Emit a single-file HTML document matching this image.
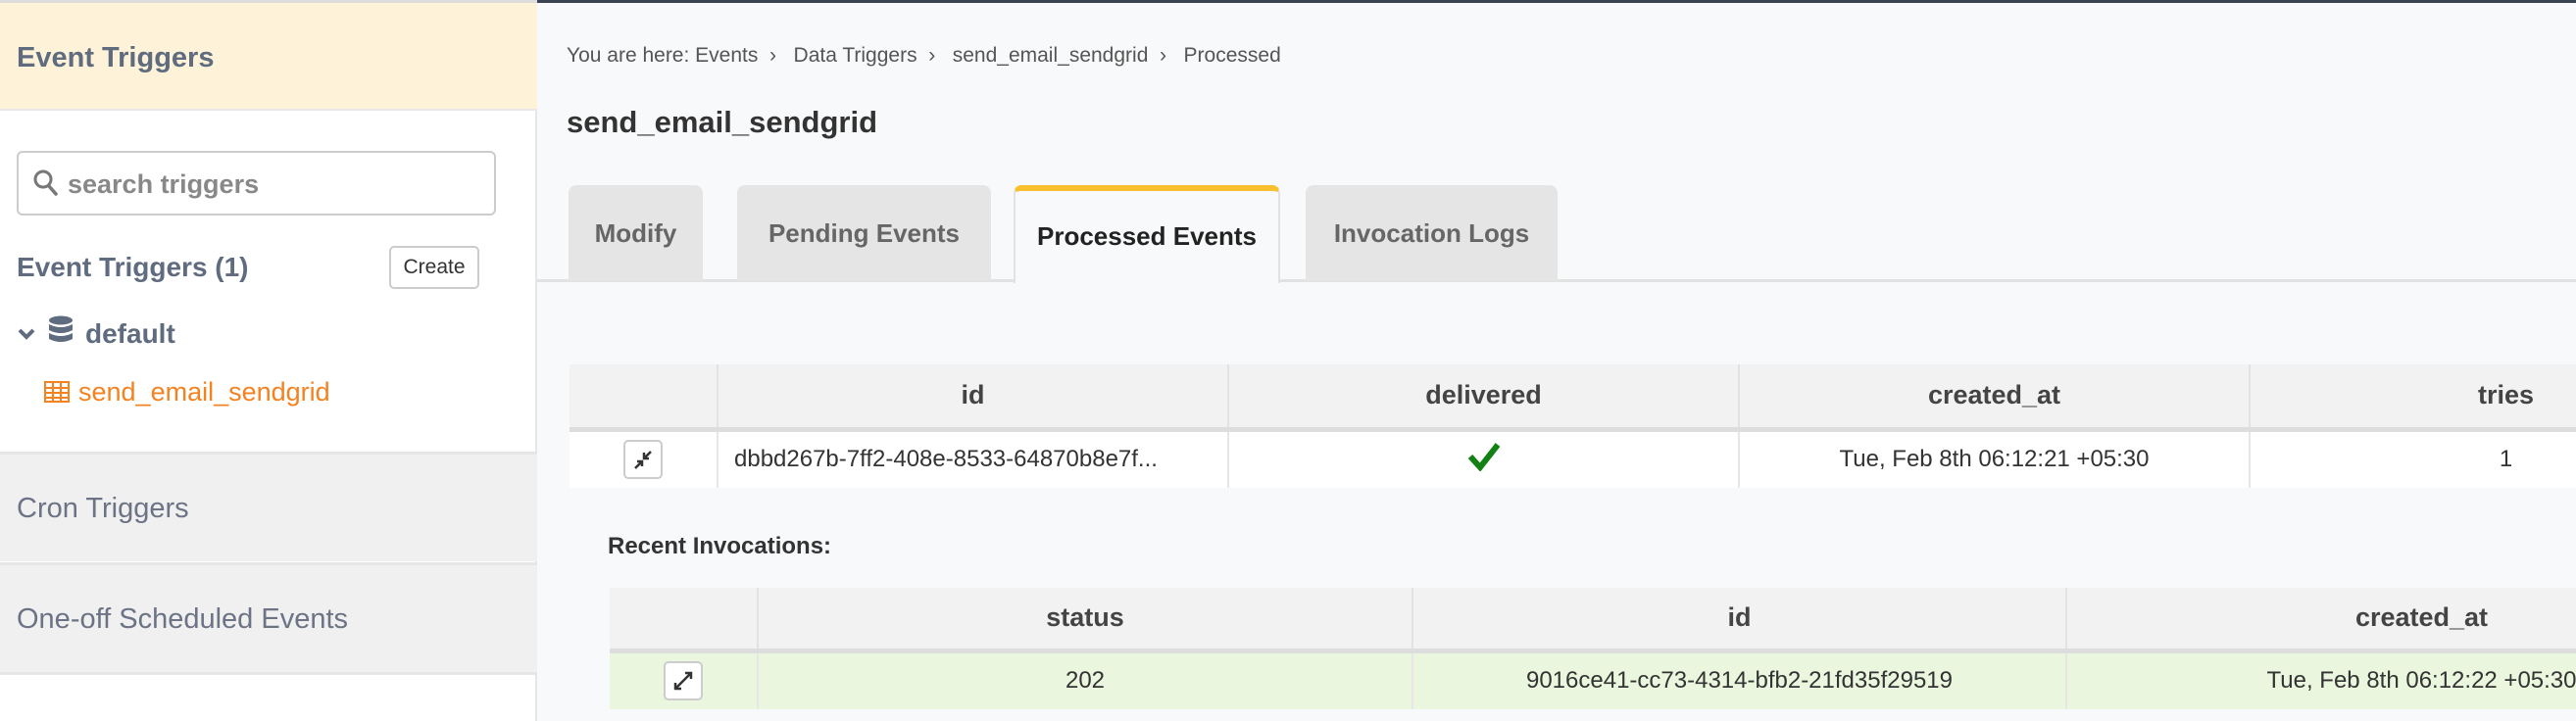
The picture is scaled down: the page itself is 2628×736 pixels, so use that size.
<!DOCTYPE html>
<html><head><meta charset="utf-8"><style>
*{box-sizing:border-box;margin:0;padding:0}
body{width:2628px;height:736px;overflow:hidden;background:#f8f9fa;font-family:"Liberation Sans Narrow","Liberation Sans",sans-serif;color:#333;position:relative}
.abs{position:absolute}
#topline{left:548px;top:0;width:2080px;height:3px;background:#3b4252}
#side{left:0;top:0;width:548px;height:736px;background:#fff;border-right:2px solid #e6e6e6}
.hdr{left:0;top:0;width:548px;height:113px;background:#fef3d8;border-top:3px solid #ddd;border-bottom:2px solid #e8e8e8;color:#5f6b7f;font-weight:bold;font-size:29px;padding:40px 0 0 17px}
.search{left:17px;top:154px;width:489px;height:66px;border:2px solid #ccc;border-radius:6px;color:#888;font-size:27px;font-weight:bold;padding:17px 0 0 50px}
.lbl{color:#5f6b7f;font-weight:bold;font-size:28px}
.create{left:397px;top:251px;width:92px;height:44px;border:2px solid #ccc;border-radius:5px;font-size:21px;text-align:center;line-height:40px;color:#333;background:#fff}
.sec{left:0;width:548px;height:112px;background:#f0f0f0;border-top:3px solid #e6e6e6;color:#6b7385;font-size:29px;padding:39px 0 0 17px}
.crumb{left:578px;top:45px;font-size:21px;color:#555}
.title{left:578px;top:107px;font-size:31px;font-weight:bold;color:#333}
.tab{top:189px;height:98px;background:#e5e5e5;border-radius:8px 8px 0 0;color:#666;font-weight:bold;font-size:26px;text-align:center;line-height:98px}
.tabline{left:548px;top:285px;width:2080px;height:3px;background:#e2e2e2}
table{position:absolute;border-collapse:collapse;table-layout:fixed}
th{background:#f2f2f2;font-size:27px;color:#444;border-left:2px solid #e2e2e2;border-bottom:5px solid #ddd;font-weight:bold}
td{font-size:24px;color:#333;border-left:2px solid #e6e6e6;text-align:center;white-space:nowrap;overflow:hidden}
th:first-child,td:first-child{border-left:none}
.btn{display:inline-block;width:40px;height:40px;border:2px solid #ccc;border-radius:5px;background:#fff;vertical-align:middle}
</style></head><body>
<div class="abs" id="side"></div>
<div class="abs" id="topline"></div>
<div class="abs hdr">Event Triggers</div>
<div class="abs search"><svg class="abs" style="left:14px;top:16px" width="28" height="30" viewBox="0 0 28 30"><circle cx="11" cy="11" r="8" fill="none" stroke="#777" stroke-width="3"/><path d="M17 18 L24 26" stroke="#777" stroke-width="3.5" stroke-linecap="round"/></svg>search triggers</div>
<div class="abs lbl" style="left:17px;top:257px">Event Triggers (1)</div>
<div class="abs create">Create</div>
<svg class="abs" style="left:17px;top:333px" width="20" height="16" viewBox="0 0 20 16"><path d="M3 4 L10 11 L17 4" fill="none" stroke="#5f6b7f" stroke-width="4"/></svg>
<svg class="abs" style="left:48px;top:322px" width="28" height="32" viewBox="0 0 28 32"><ellipse cx="14" cy="5" rx="12" ry="4.5" fill="#5f6b7f"/><path d="M2 9 Q14 15 26 9 V15 Q14 21 2 15Z M2 18 Q14 24 26 18 V24 Q14 30 2 24Z" fill="#5f6b7f"/></svg>
<div class="abs lbl" style="left:87px;top:325px">default</div>
<svg class="abs" style="left:45px;top:389px" width="26" height="22" viewBox="0 0 26 22"><rect x="1" y="1" width="24" height="20" fill="none" stroke="#f58220" stroke-width="2"/><path d="M1 7H25M1 12H25M1 17H25M9 1V21M17 1V21" stroke="#f58220" stroke-width="2"/></svg>
<div class="abs" style="left:80px;top:385px;font-size:27px;color:#f58220">send_email_sendgrid</div>
<div class="abs sec" style="top:461px">Cron Triggers</div>
<div class="abs sec" style="top:574px;border-bottom:3px solid #e6e6e6;height:115px">One-off Scheduled Events</div>

<div class="abs crumb">You are here: Events &nbsp;›&nbsp;&nbsp; Data Triggers &nbsp;›&nbsp;&nbsp; send_email_sendgrid &nbsp;›&nbsp;&nbsp; Processed</div>
<div class="abs title">send_email_sendgrid</div>
<div class="abs tabline"></div>
<div class="abs tab" style="left:580px;width:137px">Modify</div>
<div class="abs tab" style="left:752px;width:259px">Pending Events</div>
<div class="abs tab" style="left:1034px;width:272px;background:#f8f9fa;border-top:6px solid #fbc02d;border-left:2px solid #e2e2e2;border-right:2px solid #e2e2e2;color:#222;height:100px;line-height:92px">Processed Events</div>
<div class="abs tab" style="left:1332px;width:257px">Invocation Logs</div>

<table style="left:581px;top:372px;width:2236px">
<colgroup><col style="width:151px"><col style="width:521px"><col style="width:521px"><col style="width:521px"><col style="width:522px"></colgroup>
<tr style="height:66px"><th></th><th>id</th><th>delivered</th><th>created_at</th><th>tries</th></tr>
<tr style="height:60px;background:#fff"><td><span class="btn"><svg width="36" height="36" viewBox="0 0 36 36"><path d="M10 27 L16 21 M12 20 H17 V25 M26 10 L20 16 M19 11 V17 H24" stroke="#333" stroke-width="2.5" fill="none"/></svg></span></td><td style="text-align:left;padding-left:16px">dbbd267b-7ff2-408e-8533-64870b8e7f...</td><td><svg width="34" height="30" viewBox="0 0 34 30"><path d="M3 15 L13 26 L31 3" fill="none" stroke="#128012" stroke-width="6"/></svg></td><td>Tue, Feb 8th 06:12:21 +05:30</td><td>1</td></tr>
</table>
<div class="abs" style="left:620px;top:544px;font-size:24px;font-weight:bold;color:#333">Recent Invocations:</div>
<table style="left:622px;top:600px;width:2210px">
<colgroup><col style="width:151px"><col style="width:668px"><col style="width:667px"><col style="width:724px"></colgroup>
<tr style="height:64px"><th></th><th>status</th><th>id</th><th>created_at</th></tr>
<tr style="height:60px;background:#eaf7de"><td><span class="btn"><svg width="36" height="36" viewBox="0 0 36 36"><path d="M10 26 L26 10 M20 10 H26 V16 M10 20 V26 H16" stroke="#333" stroke-width="2.5" fill="none"/></svg></span></td><td>202</td><td>9016ce41-cc73-4314-bfb2-21fd35f29519</td><td>Tue, Feb 8th 06:12:22 +05:30</td></tr>
</table>
</body></html>
